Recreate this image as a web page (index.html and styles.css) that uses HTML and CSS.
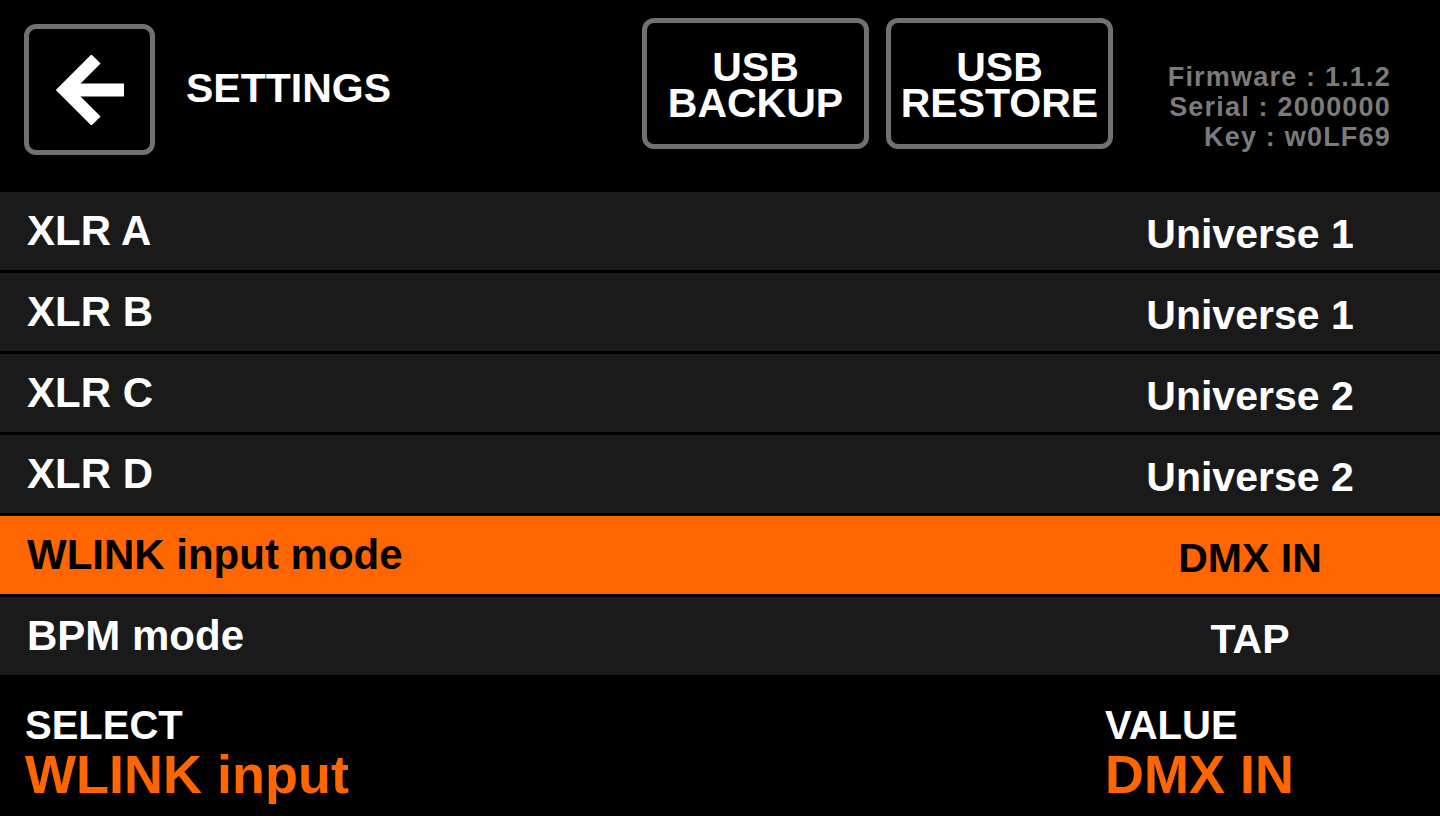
FILE: index.html
```html
<!DOCTYPE html>
<html lang="en">
<head>
  <meta charset="UTF-8">
  <meta name="viewport" content="width=device-width, initial-scale=1.0">
  <title>Settings</title>
  <link rel="stylesheet" href="styles.css">
</head>
<body>

  <div class="header">
    <div class="back-button">
      <svg width="70" height="70" viewBox="0 0 70 70">
        <path d="M12 35 H69" stroke="#ffffff" stroke-width="13" fill="none"/>
        <path d="M41 4 L10 35 L41 66" stroke="#ffffff" stroke-width="13" fill="none" stroke-linejoin="miter"/>
      </svg>
    </div>
    <h1 class="title">SETTINGS</h1>

    <div class="usb-buttons">
      <div class="usb-button">
        <span class="usb-line">USB</span>
        <span class="usb-line">BACKUP</span>
      </div>
      <div class="usb-button">
        <span class="usb-line">USB</span>
        <span class="usb-line">RESTORE</span>
      </div>
    </div>

    <div class="device-info">
      <div>Firmware : 1.1.2</div>
      <div>Serial : 2000000</div>
      <div>Key : w0LF69</div>
    </div>
  </div>

  <div class="settings-list">
    <div class="setting-row">
      <div class="setting-label">XLR A</div>
      <div class="setting-value">Universe 1</div>
    </div>
    <div class="setting-row">
      <div class="setting-label">XLR B</div>
      <div class="setting-value">Universe 1</div>
    </div>
    <div class="setting-row">
      <div class="setting-label">XLR C</div>
      <div class="setting-value">Universe 2</div>
    </div>
    <div class="setting-row">
      <div class="setting-label">XLR D</div>
      <div class="setting-value">Universe 2</div>
    </div>
    <div class="setting-row selected">
      <div class="setting-label">WLINK input mode</div>
      <div class="setting-value">DMX IN</div>
    </div>
    <div class="setting-row">
      <div class="setting-label">BPM mode</div>
      <div class="setting-value">TAP</div>
    </div>
  </div>

  <div class="footer">
    <div class="footer-block">
      <div class="footer-caption">SELECT</div>
      <div class="footer-big">WLINK input</div>
    </div>
    <div class="footer-block">
      <div class="footer-caption">VALUE</div>
      <div class="footer-big">DMX IN</div>
    </div>
  </div>

</body>
</html>
```

FILE: styles.css
```css
body {
  font-family: 'Liberation Sans', Arial, sans-serif;
  font-weight: bold;
  background-color: #000000;
  color: #ffffff;
  margin: 0;
  width: 1440px;
  height: 816px;
  overflow: hidden;
}

/* top bar */
.header {
  display: flex;
  align-items: flex-start;
  height: 192px;
  box-sizing: border-box;
  padding: 0 49px 0 24px;
}

.back-button {
  width: 131px;
  height: 131px;
  box-sizing: border-box;
  margin-top: 24px;
  border: 5px solid #717171;
  border-radius: 12px;
  display: flex;
  align-items: center;
  justify-content: center;
}

.title {
  margin: 64px 0 0 31px;
  font-size: 41px;
  line-height: 48px;
  font-weight: bold;
}

.usb-buttons {
  display: flex;
  gap: 17px;
  margin: 18px 0 0 auto;
}

.usb-button {
  width: 227px;
  height: 131px;
  box-sizing: border-box;
  padding-top: 3px;
  border: 5px solid #717171;
  border-radius: 12px;
  display: flex;
  flex-direction: column;
  align-items: center;
  justify-content: center;
  font-size: 41px;
}

.usb-line {
  display: flex;
  align-items: center;
  height: 36px;
  line-height: 30px;
}

.device-info {
  width: 240px;
  margin: 62px 0 0 38px;
  text-align: right;
  color: #7b7b7b;
  font-size: 27px;
  line-height: 30px;
  letter-spacing: 1.2px;
}

/* list */
.settings-list {
  display: flex;
  flex-direction: column;
  gap: 3px;
}

.setting-row {
  height: 78px;
  background-color: #1a1a1a;
  display: grid;
  grid-template-columns: 1fr 380px;
  align-items: center;
}

.setting-row.selected {
  background-color: #ff6600;
  color: #000000;
}

.setting-label {
  padding-left: 27px;
  font-size: 42px;
  line-height: 48px;
}

.setting-value {
  padding-top: 6px;
  text-align: center;
  font-size: 41px;
  line-height: 48px;
}

/* bottom status */
.footer {
  display: grid;
  grid-template-columns: 1080px 1fr;
  padding: 28px 0 0 25px;
}

.footer-caption {
  font-size: 40px;
  line-height: 44px;
}

.footer-big {
  color: #ff6600;
  font-size: 54px;
  line-height: 54px;
}
```
